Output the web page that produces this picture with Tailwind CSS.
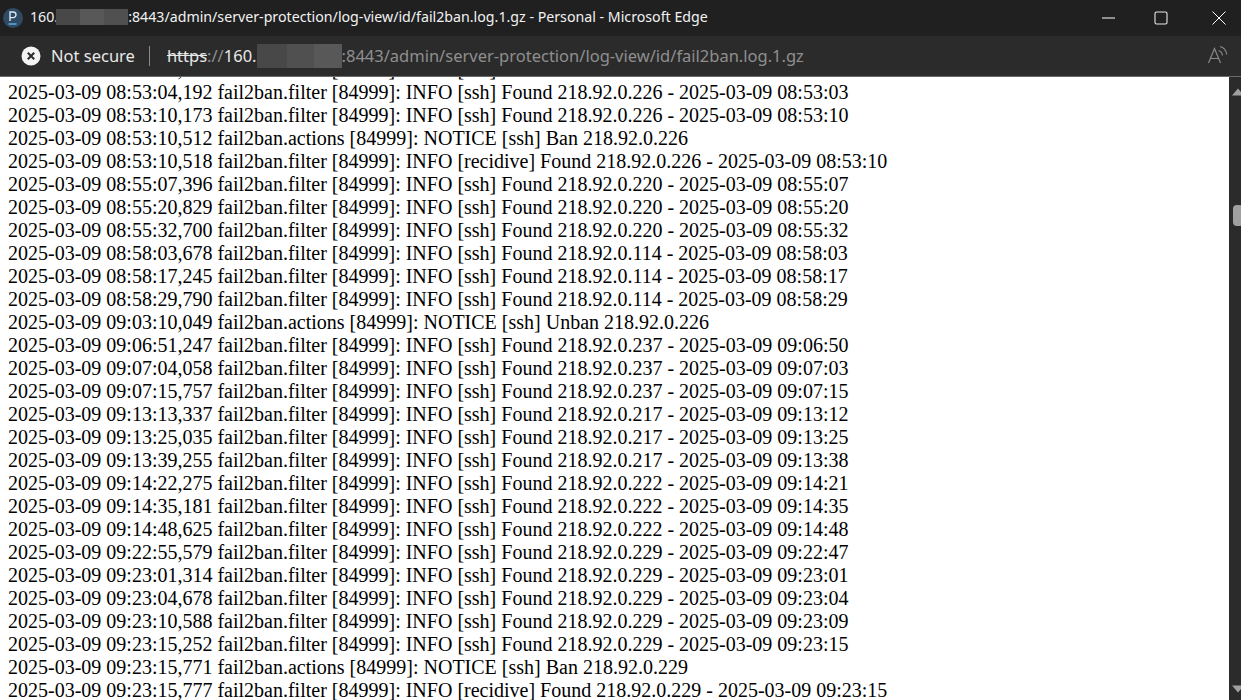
<!DOCTYPE html>
<html>
<head>
<meta charset="utf-8">
<script src="https://cdn.jsdelivr.net/npm/@tailwindcss/browser@4"></script>
</head>
<body class="bg-white overflow-hidden">
<div class="w-[1241px] h-[700px] flex flex-col overflow-hidden font-['Noto_Sans','Open_Sans',sans-serif]">
  <header class="h-9 shrink-0 bg-[#202020] flex items-center text-white relative">
    <div class="ml-[3px] w-[20px] h-[20px] rounded-full bg-[#2f4a63] flex flex-col items-center justify-center">
      <svg width="12" height="16" viewBox="0 0 12 16" fill="none" stroke="#dbe7f0" stroke-width="1.4"><path d="M3 11V2h3.2a2.6 2.6 0 0 1 0 5.6H3"/><path d="M1.500 14h8" stroke="#5fb4e6"/></svg>
    </div>
    <div class="ml-[7px] text-[14.2px] leading-none whitespace-nowrap flex items-center text-[#f2f2f2] -translate-y-px">
      <span>160.</span><span class="flex w-[72px] h-4 -ml-[2px]"><span class="w-6 bg-[#484848]"></span><span class="w-6 bg-[#585858]"></span><span class="w-6 bg-[#505050]"></span></span><span>:8443/admin/server-protection/log-view/id/fail2ban.log.1.gz - Personal - Microsoft Edge</span>
    </div>
    <div class="ml-auto flex items-center h-full">
      <svg class="mr-[38px]" width="14" height="2" viewBox="0 0 14 2"><path d="M0 1h13" stroke="#fff" stroke-width="1"/></svg>
      <svg class="mr-[44px]" width="14" height="14" viewBox="0 0 14 14" fill="none"><rect x="1" y="1" width="12" height="12" rx="1.5" stroke="#e8e8e8" stroke-width="1.1"/></svg>
      <svg class="mr-[15px]" width="14" height="14" viewBox="0 0 14 14" fill="none"><path d="M.5.5l13 13M13.500.5l-13 13" stroke="#fff" stroke-width="1"/></svg>
    </div>
  </header>
  <nav class="h-[41px] shrink-0 bg-[#2b2b2b] border-b border-[#6a6a6a] flex items-center relative">
    <svg class="ml-[21px]" width="20" height="20" viewBox="0 0 20 20"><circle cx="10" cy="10" r="9.500" fill="#f4f4f4"/><path d="M6.800 6.800l6.400 6.400M13.200 6.800l-6.400 6.400" stroke="#2b2b2b" stroke-width="2"/></svg>
    <span class="ml-[10px] text-[16.500px] text-[#e8e8e8] whitespace-nowrap">Not secure</span>
    <span class="ml-[14px] w-px h-5 bg-[#8a8a8a]"></span>
    <div class="ml-[17px] text-[16.500px] whitespace-nowrap flex items-center text-[#8f8f8f]">
      <span class="line-through decoration-[#e8e8e8] text-[#e8e8e8]">https</span><span>://</span><span class="text-[#e8e8e8]">160.</span><span class="flex w-[85px] h-[24px]"><span class="w-[30px] bg-[#484848]"></span><span class="w-[27px] bg-[#505050]"></span><span class="w-[28px] bg-[#585858]"></span></span><span>:8443/admin/server-protection/log-view/id/fail2ban.log.1.gz</span>
    </div>
    <svg class="ml-auto mr-[11px]" width="22" height="22" viewBox="0 0 22 22" fill="none" stroke="#8a8a8a" stroke-width="1.200"><path d="M.5 18L6.500 3.500 12.500 18M2.500 13.500h8"/><path d="M10.500 5.500c2 .5 3.500 2 4 5M12 1.500c3.500.8 6 3.500 6.800 8"/></svg>
  </nav>
  <div class="flex-1 min-h-0 flex">
    <main class="flex-1 overflow-hidden bg-white text-black font-['Liberation_Serif',serif] text-[20px] leading-[23px] whitespace-nowrap pl-2">
      <div class="-mt-[19px]">2025-03-09 08:52:51,204 fail2ban.filter [84999]: INFO [ssh] Found 218.92.0.226 - 2025-03-09 08:52:51</div>
      <div>2025-03-09 08:53:04,192 fail2ban.filter [84999]: INFO [ssh] Found 218.92.0.226 - 2025-03-09 08:53:03</div>
      <div>2025-03-09 08:53:10,173 fail2ban.filter [84999]: INFO [ssh] Found 218.92.0.226 - 2025-03-09 08:53:10</div>
      <div>2025-03-09 08:53:10,512 fail2ban.actions [84999]: NOTICE [ssh] Ban 218.92.0.226</div>
      <div>2025-03-09 08:53:10,518 fail2ban.filter [84999]: INFO [recidive] Found 218.92.0.226 - 2025-03-09 08:53:10</div>
      <div>2025-03-09 08:55:07,396 fail2ban.filter [84999]: INFO [ssh] Found 218.92.0.220 - 2025-03-09 08:55:07</div>
      <div>2025-03-09 08:55:20,829 fail2ban.filter [84999]: INFO [ssh] Found 218.92.0.220 - 2025-03-09 08:55:20</div>
      <div>2025-03-09 08:55:32,700 fail2ban.filter [84999]: INFO [ssh] Found 218.92.0.220 - 2025-03-09 08:55:32</div>
      <div>2025-03-09 08:58:03,678 fail2ban.filter [84999]: INFO [ssh] Found 218.92.0.114 - 2025-03-09 08:58:03</div>
      <div>2025-03-09 08:58:17,245 fail2ban.filter [84999]: INFO [ssh] Found 218.92.0.114 - 2025-03-09 08:58:17</div>
      <div>2025-03-09 08:58:29,790 fail2ban.filter [84999]: INFO [ssh] Found 218.92.0.114 - 2025-03-09 08:58:29</div>
      <div>2025-03-09 09:03:10,049 fail2ban.actions [84999]: NOTICE [ssh] Unban 218.92.0.226</div>
      <div>2025-03-09 09:06:51,247 fail2ban.filter [84999]: INFO [ssh] Found 218.92.0.237 - 2025-03-09 09:06:50</div>
      <div>2025-03-09 09:07:04,058 fail2ban.filter [84999]: INFO [ssh] Found 218.92.0.237 - 2025-03-09 09:07:03</div>
      <div>2025-03-09 09:07:15,757 fail2ban.filter [84999]: INFO [ssh] Found 218.92.0.237 - 2025-03-09 09:07:15</div>
      <div>2025-03-09 09:13:13,337 fail2ban.filter [84999]: INFO [ssh] Found 218.92.0.217 - 2025-03-09 09:13:12</div>
      <div>2025-03-09 09:13:25,035 fail2ban.filter [84999]: INFO [ssh] Found 218.92.0.217 - 2025-03-09 09:13:25</div>
      <div>2025-03-09 09:13:39,255 fail2ban.filter [84999]: INFO [ssh] Found 218.92.0.217 - 2025-03-09 09:13:38</div>
      <div>2025-03-09 09:14:22,275 fail2ban.filter [84999]: INFO [ssh] Found 218.92.0.222 - 2025-03-09 09:14:21</div>
      <div>2025-03-09 09:14:35,181 fail2ban.filter [84999]: INFO [ssh] Found 218.92.0.222 - 2025-03-09 09:14:35</div>
      <div>2025-03-09 09:14:48,625 fail2ban.filter [84999]: INFO [ssh] Found 218.92.0.222 - 2025-03-09 09:14:48</div>
      <div>2025-03-09 09:22:55,579 fail2ban.filter [84999]: INFO [ssh] Found 218.92.0.229 - 2025-03-09 09:22:47</div>
      <div>2025-03-09 09:23:01,314 fail2ban.filter [84999]: INFO [ssh] Found 218.92.0.229 - 2025-03-09 09:23:01</div>
      <div>2025-03-09 09:23:04,678 fail2ban.filter [84999]: INFO [ssh] Found 218.92.0.229 - 2025-03-09 09:23:04</div>
      <div>2025-03-09 09:23:10,588 fail2ban.filter [84999]: INFO [ssh] Found 218.92.0.229 - 2025-03-09 09:23:09</div>
      <div>2025-03-09 09:23:15,252 fail2ban.filter [84999]: INFO [ssh] Found 218.92.0.229 - 2025-03-09 09:23:15</div>
      <div>2025-03-09 09:23:15,771 fail2ban.actions [84999]: NOTICE [ssh] Ban 218.92.0.229</div>
      <div>2025-03-09 09:23:15,777 fail2ban.filter [84999]: INFO [recidive] Found 218.92.0.229 - 2025-03-09 09:23:15</div>
    </main>
    <aside class="w-3 shrink-0 bg-[#2b2b2b] relative overflow-hidden">
      <svg class="absolute left-[3px] top-[11px]" width="12" height="8" viewBox="0 0 12 8"><path d="M0 7.500L6 .5l6 7z" fill="#a0a0a0"/></svg>
      <div class="absolute left-[4px] top-[128px] w-[10px] h-[21px] rounded-[4px] bg-[#a0a0a0]"></div>
      <svg class="absolute left-[3px] top-[608px]" width="12" height="8" viewBox="0 0 12 8"><path d="M0 .5L6 7.500l6-7z" fill="#a0a0a0"/></svg>
    </aside>
  </div>
</div>
</body>
</html>
